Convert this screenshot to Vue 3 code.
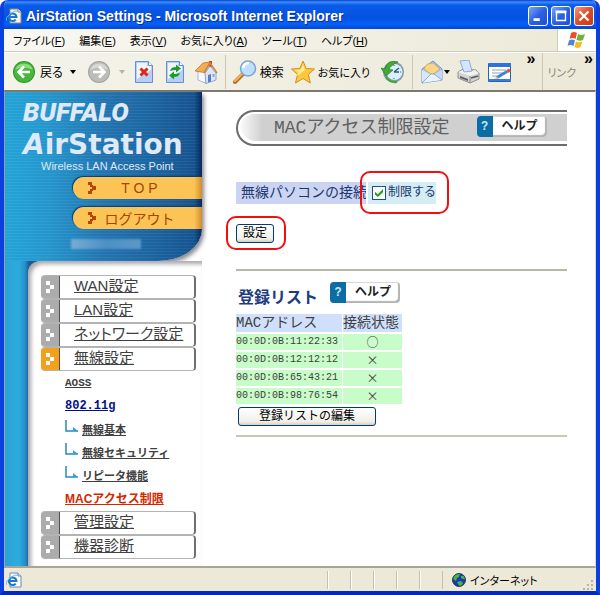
<template>
  <div class="window">
    <header class="titlebar">
      <svg class="page-icon" viewBox="0 0 16 16" aria-hidden="true">
        <path d="M4 1h8l3 3v11H4z" fill="#f8f4e4" stroke="#8a8a7a" />
        <path d="M12 1v3h3" fill="#fff" stroke="#8a8a7a" />
        <path d="M3 9h7.500a3.800 3.800 0 1 0-.8 2.600" fill="none" stroke="#1878d0" stroke-width="2" />
        <path d="M0 13q-1-3 4-7t8-3" fill="none" stroke="#5ab8f0" />
      </svg>
      <h1 class="title">AirStation Settings - Microsoft Internet Explorer</h1>
      <div class="controls">
        <button type="button" class="control" aria-label="最小化">
          <svg viewBox="0 0 20 20"><path d="M5 14h7" stroke="#fff" stroke-width="3" /></svg>
        </button>
        <button type="button" class="control" aria-label="最大化">
          <svg viewBox="0 0 20 20"><path d="M5 5.500h10v9.500H5z" fill="none" stroke="#fff" stroke-width="1.500" /><path d="M4 5.500h12" stroke="#fff" stroke-width="3" /></svg>
        </button>
        <button type="button" class="control close" aria-label="閉じる">
          <svg viewBox="0 0 20 20"><path d="M5 5l10 10M15 5L5 15" stroke="#fff" stroke-width="2.400" /></svg>
        </button>
      </div>
    </header>

    <nav class="menubar" aria-label="メニュー">
      <button v-for="item in menus" :key="item.key" type="button" class="menu">{{ item.label }}(<u>{{ item.key }}</u>)</button>
      <div class="flag">
        <svg viewBox="0 0 22 20" aria-hidden="true">
          <path d="M5 3q3-2 6 0L9.500 9q-3-2-6 0z" fill="#e8502c" />
          <path d="M12 4q3 2 7 0l-2 6q-3 1.500-6.500 0z" fill="#6cb33c" />
          <path d="M3 10.500q3-2 6 0L7.500 16q-3-2-6 0z" fill="#4a86dc" />
          <path d="M10 11.500q3 1.500 6.500 0l-2 5.500q-3 2-6 0z" fill="#f6bc28" />
        </svg>
      </div>
    </nav>

    <div class="toolbar">
      <button type="button" class="tool tool-back">
        <svg viewBox="0 0 24 24">
          <circle cx="12" cy="12" r="11" fill="#2f9a2a" />
          <circle cx="12" cy="12" r="10" fill="#48b63c" />
          <path d="M3 10a9.500 9.500 0 0 1 18 0q-9-5-18 0z" fill="#8fdb7c" />
          <path d="M18 12H7M12 6.500L6.500 12l5.500 5.500" fill="none" stroke="#fff" stroke-width="2.600" />
        </svg>
        <span>戻る</span>
        <i class="caret"></i>
      </button>
      <button type="button" class="tool tool-forward" aria-label="進む">
        <svg viewBox="0 0 24 24">
          <circle cx="12" cy="12" r="11" fill="#a4a4a0" />
          <circle cx="12" cy="12" r="10" fill="#bcbcb8" />
          <path d="M3 10a9.500 9.500 0 0 1 18 0q-9-5-18 0z" fill="#d6d6d2" />
          <path d="M6 12h11M12 6.500l5.500 5.500-5.500 5.500" fill="none" stroke="#fff" stroke-width="2.600" />
        </svg>
        <i class="caret caret-off"></i>
      </button>
      <button type="button" class="tool" aria-label="中止">
        <svg viewBox="0 0 24 24">
          <path d="M3.500 1.500h13l4 4v17h-17z" fill="#b4d0f8" stroke="#6a8cc8" />
          <path d="M5 3h10v3h4v4L5 19z" fill="#eef5ff" />
          <path d="M16.500 1.500v4h4" fill="#fff" stroke="#6a8cc8" />
          <path d="M8.500 8.500l7 7M15.500 8.500l-7 7" stroke="#e02810" stroke-width="3" />
        </svg>
      </button>
      <button type="button" class="tool" aria-label="更新">
        <svg viewBox="0 0 24 24">
          <path d="M3.500 1.500h13l4 4v17h-17z" fill="#b4d0f8" stroke="#6a8cc8" />
          <path d="M5 3h10v3h4v4L5 19z" fill="#eef5ff" />
          <path d="M16.500 1.500v4h4" fill="#fff" stroke="#6a8cc8" />
          <path d="M7 11q1-4 6-4V4.500l5 4-5 4V10q-3 0-6 1z" fill="#219a2c" />
          <path d="M17 13q-1 4-6 4v2.500l-5-4 5-4V14q3 0 6-1z" fill="#219a2c" />
        </svg>
      </button>
      <button type="button" class="tool" aria-label="ホーム">
        <svg viewBox="0 0 24 24">
          <path d="M15 1h3v6h-3z" fill="#c8402c" />
          <path d="M4 12v8l8 3.500V11l-4-5z" fill="#f4f8ff" stroke="#8c9cc4" stroke-width=".7" />
          <path d="M11 13l5-7 6 7v7l-10 3.500z" fill="#dbe6fa" stroke="#7088bc" stroke-width=".7" />
          <path d="M1 11L9 3l7-1-6 10.500z" fill="#f4ac50" stroke="#b87020" stroke-width=".7" />
          <path d="M10 13l6-10 7 10" fill="none" stroke="#d08838" stroke-width="1.500" />
          <path d="M14 15l3-1v7.500l-3 1z" fill="#5c7cc0" />
          <path d="M18.500 14h2v3h-2z" fill="#88a8dc" />
        </svg>
      </button>
      <span class="separator"></span>
      <button type="button" class="tool">
        <svg viewBox="0 0 24 24">
          <path d="M2 22l8-8" stroke="#b8742c" stroke-width="4" stroke-linecap="round" />
          <path d="M2 21l8-8" stroke="#f0b45c" stroke-width="2" stroke-linecap="round" />
          <circle cx="15" cy="8.500" r="7.500" fill="#bfe0fa" stroke="#7fa2d4" stroke-width="1.500" />
          <path d="M10 8q1-5 6-5" fill="none" stroke="#fff" stroke-width="2.500" />
        </svg>
        <span>検索</span>
      </button>
      <button type="button" class="tool tool-star">
        <svg viewBox="0 0 24 24">
          <path d="M12 1l3.200 7.500 8.300.5-6.200 5.500 2 8.500L12 18.500 4.500 23l2-8.500L.5 9l8.300-.5z" fill="#fcc93c" stroke="#d88c1c" />
          <path d="M12 4l2 6-8 6 1.500-4L3 10l7-.5z" fill="#ffec9c" />
        </svg>
        <span>お気に入り</span>
      </button>
      <button type="button" class="tool tool-history" aria-label="履歴">
        <svg viewBox="0 0 24 24">
          <circle cx="12.500" cy="12" r="10.500" fill="#8298a8" />
          <circle cx="13.500" cy="12" r="8" fill="#dceefa" />
          <path d="M13 12l5-4M13 12h5" stroke="#355878" stroke-width="1.500" />
          <path d="M13 5v1M20 12h-1M13 19v-1" stroke="#355878" />
          <path d="M17 2Q6-1 4 9L0 8l5 8 7-6-4-.5q1-4 9-7.500z" fill="#42aa38" stroke="#237c22" stroke-width=".7" />
          <path d="M5 17q4 6 11 5" fill="none" stroke="#42aa38" stroke-width="2" />
        </svg>
      </button>
      <span class="separator"></span>
      <button type="button" class="tool tool-mail" aria-label="メール">
        <svg viewBox="0 0 24 24">
          <path d="M2 9L13 1l9 8v11L2 23z" fill="#a8c8f4" stroke="#7090c8" />
          <path d="M4 9q2-6 9-6l7 6-8 6z" fill="#fbd684" stroke="#c89c50" stroke-width=".7" />
          <path d="M2 10l9 5L2 22z" fill="#d8e8fc" />
          <path d="M22 10l-9 5 9 5z" fill="#c4daf8" />
          <path d="M2 23l9-9h3l8 6" fill="#e8f2ff" stroke="#7090c8" stroke-width=".7" />
        </svg>
        <i class="caret"></i>
      </button>
      <button type="button" class="tool" aria-label="印刷">
        <svg viewBox="0 0 24 24">
          <path d="M1 12l5-3 13 1 3 3v6l-9 4-12-5z" fill="#d4d4d4" stroke="#787878" stroke-width=".8" />
          <path d="M1 12l12 4 9-3-4-3-5 2-7-2z" fill="#f2f2f2" />
          <path d="M3 1l9-1 3 11-8 1z" fill="#d4e6ff" stroke="#7c9cd0" stroke-width=".8" />
          <path d="M13 16v7" stroke="#888" />
          <path d="M3 16l8 3v2l-8-3z" fill="#606060" />
          <path d="M14 18l7-2" stroke="#555" stroke-width="1.500" />
        </svg>
      </button>
      <button type="button" class="tool" aria-label="編集">
        <svg viewBox="0 0 24 24">
          <path d="M.5 3.500h22v18H.5z" fill="#fff" stroke="#1c64c8" />
          <path d="M1 3h22v4H1z" fill="#2c74dc" />
          <path d="M1 19h22v2H1z" fill="#3c7cd8" />
          <path d="M4 10h14M4 13h11M4 16h5" stroke="#98a0b0" />
          <path d="M9 17.500l10-6" stroke="#3c84d8" stroke-width="3" />
          <path d="M19 11.500l3-1.500" stroke="#e05830" stroke-width="3.500" />
          <path d="M6 18.500l4-2v2z" fill="#e0a860" />
        </svg>
      </button>
      <span class="chevron">»</span>
      <div class="links">
        <span>リンク</span>
        <span class="chevron">»</span>
      </div>
    </div>

    <div class="page">
      <aside class="sidebar">
        <div class="brand">
          <div class="buffalo">BUFFALO</div>
          <div class="airstation"><em>A</em>irStation</div>
          <div class="tagline">Wireless LAN Access Point</div>
          <a v-for="pill in pills" :key="pill" href="#" class="pill">
            <svg viewBox="0 0 10 12" aria-hidden="true">
              <path d="M1 0h4v3H1zM5 4h4v4H5zM1 9h4v3H1zM3 3h3v2H3zM3 7h3v2H3z" fill="#b04808" />
            </svg>
            <span>{{ pill }}</span>
          </a>
          <div class="smudge"></div>
        </div>
        <div class="rail">
          <nav class="nav" aria-label="設定メニュー">
            <template v-for="item in nav" :key="item.label">
              <a href="#" class="nav-item" :class="{ active: item.children }">
                <span class="marker">
                  <svg viewBox="0 0 8 12" aria-hidden="true"><path d="M0 0h4v4H0zM4 4h4v4H4zM0 8h4v4H0z" fill="#fff" /></svg>
                </span>
                <span class="nav-label">{{ item.label }}</span>
              </a>
              <ul v-if="item.children" class="subnav">
                <li v-for="sub in item.children" :key="sub.label" :class="sub.kind">
                  <svg v-if="sub.kind === 'leaf'" viewBox="0 0 14 14" aria-hidden="true">
                    <path d="M1 0v11h12" fill="none" stroke="#2888c8" stroke-width="1.500" />
                    <path d="M8 7l5 4H8z" fill="#2ba0ec" />
                  </svg>
                  <a href="#">{{ sub.label }}</a>
                </li>
              </ul>
            </template>
          </nav>
        </div>
      </aside>

      <main class="content">
        <div class="heading">
          <h2>MACアクセス制限設定</h2>
          <button type="button" class="help"><b>?</b><span>ヘルプ</span></button>
        </div>

        <form class="form" @submit.prevent>
          <div class="field">
            <span class="field-name">無線パソコンの接続</span>
            <label class="field-value" for="restrict">
              <input id="restrict" v-model="restricted" type="checkbox">
              <span>制限する</span>
            </label>
          </div>
          <div class="submit">
            <button type="submit" class="xp-button">設定</button>
          </div>
        </form>

        <section class="list">
          <div class="list-heading">
            <h3>登録リスト</h3>
            <button type="button" class="help"><b>?</b><span>ヘルプ</span></button>
          </div>
          <table>
            <thead>
              <tr>
                <th scope="col">MACアドレス</th>
                <th scope="col">接続状態</th>
              </tr>
            </thead>
            <tbody>
              <tr v-for="client in clients" :key="client.mac">
                <td>{{ client.mac }}</td>
                <td class="state">{{ client.connected ? '○' : '×' }}</td>
              </tr>
            </tbody>
          </table>
          <button type="button" class="xp-button edit">登録リストの編集</button>
        </section>
      </main>
    </div>

    <footer class="statusbar">
      <svg class="status-icon" viewBox="0 0 16 16" aria-hidden="true">
        <path d="M4 1h8l3 3v11H4z" fill="#fff" stroke="#6888b8" />
        <path d="M12 1v3h3" fill="#dce8fa" stroke="#6888b8" />
        <path d="M3 9h7.500a3.800 3.800 0 1 0-.8 2.600" fill="none" stroke="#1878d0" stroke-width="2" />
        <path d="M0 13q-1-3 4-7t8-3" fill="none" stroke="#5ab8f0" />
      </svg>
      <span v-for="n in 5" :key="n" class="pane"></span>
      <div class="zone">
        <svg viewBox="0 0 14 14" aria-hidden="true">
          <circle cx="7" cy="7" r="6.500" fill="#1838b8" />
          <path d="M2 3q3-3 6-2L7 4 5 5 4 8 1 6zM9 3l3-.5 1.500 4L11 6 9 5zM5 9l4-1 2 2-2 3.500-2-1z" fill="#48b838" />
          <circle cx="7" cy="7" r="6.500" fill="none" stroke="#102048" stroke-width=".8" />
        </svg>
        <span>インターネット</span>
      </div>
      <svg class="grip" viewBox="0 0 12 12" aria-hidden="true">
        <path d="M9 1h2v2H9zM5 5h2v2H5zM9 5h2v2H9zM1 9h2v2H1zM5 9h2v2H5zM9 9h2v2H9z" fill="#b8b4a0" />
      </svg>
    </footer>
  </div>
</template>

<script setup>
import { ref } from 'vue'

const restricted = ref(true)

const menus = [
  { label: 'ファイル', key: 'F' },
  { label: '編集', key: 'E' },
  { label: '表示', key: 'V' },
  { label: 'お気に入り', key: 'A' },
  { label: 'ツール', key: 'T' },
  { label: 'ヘルプ', key: 'H' }
]

const pills = ['T O P', 'ログアウト']

const nav = [
  { label: 'WAN設定' },
  { label: 'LAN設定' },
  { label: 'ネットワーク設定' },
  {
    label: '無線設定',
    children: [
      { label: 'AOSS', kind: 'plain' },
      { label: '802.11g', kind: 'mode' },
      { label: '無線基本', kind: 'leaf' },
      { label: '無線セキュリティ', kind: 'leaf' },
      { label: 'リピータ機能', kind: 'leaf' },
      { label: 'MACアクセス制限', kind: 'current' }
    ]
  },
  { label: '管理設定' },
  { label: '機器診断' }
]

const clients = [
  { mac: '00:0D:0B:11:22:33', connected: true },
  { mac: '00:0D:0B:12:12:12', connected: false },
  { mac: '00:0D:0B:65:43:21', connected: false },
  { mac: '00:0D:0B:98:76:54', connected: false }
]
</script>

<style>
body {
  margin: 0;
  background: #fff;
}
</style>

<style scoped>
.window {
  display: flex;
  flex-direction: column;
  box-sizing: border-box;
  min-height: 100vh;
  border: solid #0a3fe0;
  border-width: 0 4px 4px;
  border-bottom-color: #0628b4;
  border-radius: 8px 8px 0 0;
  background: #ece9d8;
  overflow: hidden;
  font-family: "Liberation Sans", "Noto Sans CJK JP", sans-serif;
  font-size: 12px;
  color: #000;
}

button {
  padding: 0;
  border: 0;
  background: none;
  font: inherit;
  color: inherit;
  white-space: nowrap;
}

h1,
h2,
h3 {
  margin: 0;
}

svg {
  display: block;
  flex: none;
}

/* title bar */
.titlebar {
  display: flex;
  align-items: center;
  height: 29px;
  margin: 0 -4px;
  padding: 3px 6px 0;
  box-sizing: border-box;
  background: linear-gradient(#0a3cc8 0, #3c8cfc 2px, #0a5ce8 5px, #0452e0 18px, #0660fc 24px, #0446cc 29px);
}

.page-icon {
  width: 16px;
  height: 16px;
}

.title {
  flex: 1;
  margin-left: 4px;
  font-size: 14px;
  line-height: 18px;
  color: #fff;
  text-shadow: 1px 1px 0 #08308c;
}

.controls {
  display: flex;
  gap: 3px;
}

.control {
  width: 20px;
  height: 20px;
  box-sizing: border-box;
  border: 1px solid #fff;
  border-radius: 3px;
  background: linear-gradient(135deg, #7ca4f8, #2c60e4 50%, #1c50d8);
}

.control svg {
  width: 18px;
  height: 18px;
}

.control.close {
  background: linear-gradient(135deg, #f09c84, #dc4c28 50%, #c83c18);
}

/* menu bar */
.menubar {
  display: flex;
  align-items: center;
  gap: 14px;
  height: 23px;
  padding-left: 9px;
  box-sizing: border-box;
  border-bottom: 1px solid #d0ccbc;
  background: linear-gradient(90deg, #f8f7f2, #ece9d8);
}

.menu,
.tool,
.links,
.zone {
  font-feature-settings: "palt";
}

.menu {
  font-size: 11px;
}

.flag {
  display: flex;
  align-items: center;
  justify-content: center;
  width: 38px;
  height: 22px;
  margin-left: auto;
  border-left: 1px solid #d0ccbc;
  background: #fff;
}

.flag svg {
  width: 22px;
  height: 20px;
}

/* tool bar */
.toolbar {
  display: flex;
  align-items: center;
  gap: 7px;
  height: 38px;
  padding: 0 3px 0 8px;
  box-sizing: border-box;
  border-top: 1px solid #fff;
  background: linear-gradient(90deg, #f4f3ea, #ece9d8);
}

.tool {
  display: flex;
  align-items: center;
  gap: 3px;
}

.tool svg {
  width: 24px;
  height: 24px;
}

.caret {
  width: 0;
  border: 3px solid transparent;
  border-top: 4px solid #000;
  border-bottom: 0;
}

.caret-off {
  border-top-color: #b8b4a4;
}

.tool-back {
  gap: 4px;
  margin-right: 4px;
}

.tool-back .caret {
  margin-left: 3px;
}

.tool-forward {
  gap: 8px;
}

.tool-star {
  font-size: 11px;
}

.tool-history {
  margin-left: 4px;
}

.tool-mail {
  gap: 0;
}

.separator {
  width: 1px;
  height: 34px;
  background: #ccc8b4;
}

.chevron {
  align-self: flex-start;
  margin-left: auto;
  font-size: 16px;
  font-weight: bold;
  line-height: 12px;
  color: #000;
}

.links {
  display: flex;
  align-items: center;
  gap: 8px;
  height: 37px;
  padding-left: 4px;
  border-left: 1px solid #ccc8b4;
  font-size: 11px;
  color: #8c8878;
  white-space: nowrap;
}

/* browser page */
.page {
  display: flex;
  flex: 1;
  border: solid #a8a598;
  border-width: 2px 1px 2px 1px;
  border-top-color: #7c7a70;
  border-right-color: #dcd9c8;
  background: #fff;
}

.sidebar {
  display: flex;
  flex-direction: column;
  flex: none;
  width: 197px;
}

.brand {
  display: flex;
  flex-direction: column;
  height: 169px;
  box-sizing: border-box;
  padding: 8px 0 0 18px;
  border-radius: 0 0 44px 0 / 0 0 32px 0;
  background: linear-gradient(90deg, rgba(8, 40, 92, 0) 96%, rgba(6, 28, 80, 0.800)), repeating-linear-gradient(rgba(255, 255, 255, 0.060) 0 1px, transparent 1px 3px), linear-gradient(90deg, #22a4d8 0, #2496cc 22%, #2274b0 50%, #1c64a0 75%, #14508c 100%);
  box-shadow: 2px 3px 4px rgba(60, 60, 70, 0.600);
  color: #dfe9f8;
}

.buffalo {
  font-family: Roboto, "Liberation Sans", sans-serif;
  font-size: 26px;
  font-style: italic;
  font-weight: 900;
  line-height: 24px;
}

.airstation {
  font-family: "DejaVu Sans", sans-serif;
  font-size: 28px;
  font-weight: bold;
  line-height: 30px;
  margin-top: 6px;
}

.tagline {
  padding-left: 18px;
  font-size: 11px;
  line-height: 12px;
}

.pill {
  display: flex;
  align-items: center;
  height: 22px;
  margin: 0 0 8px 50px;
  border-radius: 11px 0 0 11px;
  background: linear-gradient(90deg, #fcc454 94%, #d08c2c);
  box-shadow: -1px -1px 1px #0c3c70;
  font-size: 14px;
  color: #a84408;
  text-decoration: none;
}

.tagline + .pill {
  margin-top: 5px;
}

.pill svg {
  width: 10px;
  height: 12px;
  margin-left: 14px;
}

.pill span {
  flex: 1;
  padding-right: 20px;
  text-align: center;
}

.smudge {
  width: 70px;
  height: 10px;
  margin: 2px 0 0 48px;
  background: linear-gradient(90deg, #78acd4, #4c90c4, #5c98c8);
  filter: blur(1px);
}

.rail {
  flex: 1;
  padding-left: 23px;
  background: linear-gradient(90deg, #28a4d8 0, #2cacdc 14px, #2490cc 20px, #1c5c94 24px) no-repeat 0 0 / 36px 100%;
}

.nav {
  height: 100%;
  box-sizing: border-box;
  padding: 14px 6px 6px 13px;
  border-radius: 12px 0 0 0;
  background: #fff;
  box-shadow: inset 3px 3px 4px rgba(60, 60, 70, 0.450);
}

.nav-item {
  display: flex;
  height: 24px;
  box-sizing: border-box;
  border: 1px solid #b4b4b4;
  border-width: 1px 2px 1px 0;
  border-right-color: #707070;
  border-radius: 4px;
  background: #fff;
  font-size: 15px;
  line-height: 20px;
  color: #404040;
  font-feature-settings: "palt";
}

.marker {
  display: flex;
  align-items: center;
  justify-content: center;
  width: 18px;
  border-right: 1px solid #505050;
  border-radius: 3px 0 0 3px;
  background: #acacac;
}

.marker svg {
  width: 8px;
  height: 12px;
}

.active .marker {
  background: #f4a01c;
}

.nav-label {
  margin-left: 14px;
}

.subnav {
  margin: 0 0 2px;
  padding: 0 0 0 24px;
  list-style: none;
}

.subnav li {
  display: flex;
  align-items: center;
  gap: 3px;
  height: 23px;
  font-size: 11px;
  font-weight: bold;
  white-space: nowrap;
}

.subnav svg {
  width: 14px;
  height: 14px;
  margin-bottom: 4px;
}

.subnav a {
  color: #404040;
}

.subnav .plain,
.subnav .mode {
  font-family: "Liberation Mono", monospace;
}

.subnav .mode,
.subnav .current {
  font-size: 12px;
}

.subnav .mode a {
  color: #00108c;
}

.subnav .current a {
  color: #d42800;
}

/* settings */
.content {
  flex: 1;
  min-width: 0;
  padding: 18px 28px 0 34px;
  font-family: "Liberation Mono", "Noto Sans CJK JP", monospace;
  color: #404040;
}

.heading {
  display: flex;
  align-items: center;
  gap: 27px;
  height: 36px;
  box-sizing: border-box;
  padding-left: 36px;
  border: 2px solid #6c6c6c;
  border-right: 0;
  border-radius: 18px 0 0 18px;
  background: linear-gradient(90deg, #fff, #d0d0d0 24px);
  box-shadow: inset 1px 2px 0 #fff, inset 2px -3px 0 #fff;
}

.heading h2 {
  font-size: 18px;
  font-weight: normal;
  line-height: 28px;
  color: #606060;
  white-space: nowrap;
}

.heading .help {
  margin-bottom: 4px;
}

.help {
  display: flex;
  width: 70px;
  height: 21px;
  border-radius: 4px;
  background: #fff;
  box-shadow: inset -2px -2px 1px #b4b4b4, inset 0 1px 0 #d8d8d8;
  font-size: 12px;
  font-weight: bold;
  line-height: 23px;
  color: #202020;
}

.help b {
  width: 16px;
  height: 21px;
  border-radius: 4px 0 0 4px;
  background: #0c6ca4;
  color: #c8e8fc;
}

.help span {
  flex: 1;
  text-align: center;
}

.form {
  padding: 36px 0 26px;
  border-bottom: 2px solid #b8b8a4;
}

.field {
  display: flex;
  gap: 2px;
  height: 22px;
  line-height: 22px;
  color: #20386c;
}

.field-name {
  width: 125px;
  padding-left: 5px;
  background: #ccd4f4;
  font-size: 14px;
  white-space: nowrap;
  overflow: hidden;
}

.field-value {
  position: relative;
  display: flex;
  align-items: center;
  gap: 2px;
  padding: 0 0 0 4px;
  background: #d4ecf4;
  white-space: nowrap;
}

.field-value input {
  position: relative;
  appearance: none;
  width: 14px;
  height: 14px;
  box-sizing: border-box;
  margin: 0;
  border: 1px solid #1c5180;
  background: #fff;
}

.field-value input:checked::before {
  content: "";
  position: absolute;
  inset: 2px;
  background: #21a121;
  clip-path: polygon(0 35%, 35% 65%, 100% 0, 100% 40%, 35% 100%, 0 70%);
}

/* red call-out rings drawn around a control */
.field-value::after,
.submit::after {
  content: "";
  position: absolute;
  inset: -11px -13px -10px -8px;
  border: 2px solid #f01010;
  border-radius: 10px;
  pointer-events: none;
}

.submit {
  position: relative;
  width: fit-content;
  margin-top: 20px;
}

.submit::after {
  inset: -8px -12px -7px -10px;
}

.xp-button {
  display: block;
  height: 19px;
  padding: 0 5px;
  border: 1px solid #003c74;
  border-radius: 3px;
  background: linear-gradient(#fff, #f0efe8 80%, #d6d0c4);
  box-sizing: border-box;
  font-size: 12px;
  line-height: 16px;
  color: #000;
}

.submit .xp-button {
  padding: 0 6px;
}

.list {
  padding-bottom: 9px;
  border-bottom: 2px solid #c8c8b4;
}

.list-heading {
  display: flex;
  align-items: center;
  gap: 12px;
  height: 21px;
  padding: 11px 0 9px 2px;
}

.list-heading h3 {
  padding-top: 12px;
  font-size: 16px;
  line-height: 20px;
  color: #1c3c7c;
}

table {
  border-spacing: 1px 2px;
  margin: 0 0 1px -1px;
}

th,
td {
  height: 16px;
  padding: 0;
  background: #c8fcc8;
  font-size: 10px;
  line-height: 16px;
}

th {
  height: 18px;
  background: #d0e0fc;
  font-size: 14px;
  font-weight: normal;
  line-height: 18px;
  text-align: left;
}

th:first-child {
  width: 106px;
}

th:last-child {
  width: 59px;
}

td.state {
  font-family: "Noto Sans CJK JP", sans-serif;
  font-size: 12px;
  text-align: center;
}

.xp-button.edit {
  width: 138px;
  margin-left: 2px;
}

/* status bar */
.statusbar {
  display: flex;
  align-items: center;
  height: 23px;
  padding: 0 2px;
}

.status-icon {
  width: 16px;
  height: 16px;
  margin-right: auto;
}

.pane {
  width: 22px;
  height: 18px;
  border-left: 1px solid #c4c0ac;
  box-shadow: inset 1px 0 0 #fff;
}

.zone {
  display: flex;
  align-items: center;
  gap: 4px;
  width: 130px;
  height: 18px;
  padding-left: 9px;
  border-left: 1px solid #c4c0ac;
  font-size: 11px;
}

.zone svg {
  width: 14px;
  height: 14px;
}

.grip {
  width: 12px;
  height: 12px;
  align-self: flex-end;
}
</style>
